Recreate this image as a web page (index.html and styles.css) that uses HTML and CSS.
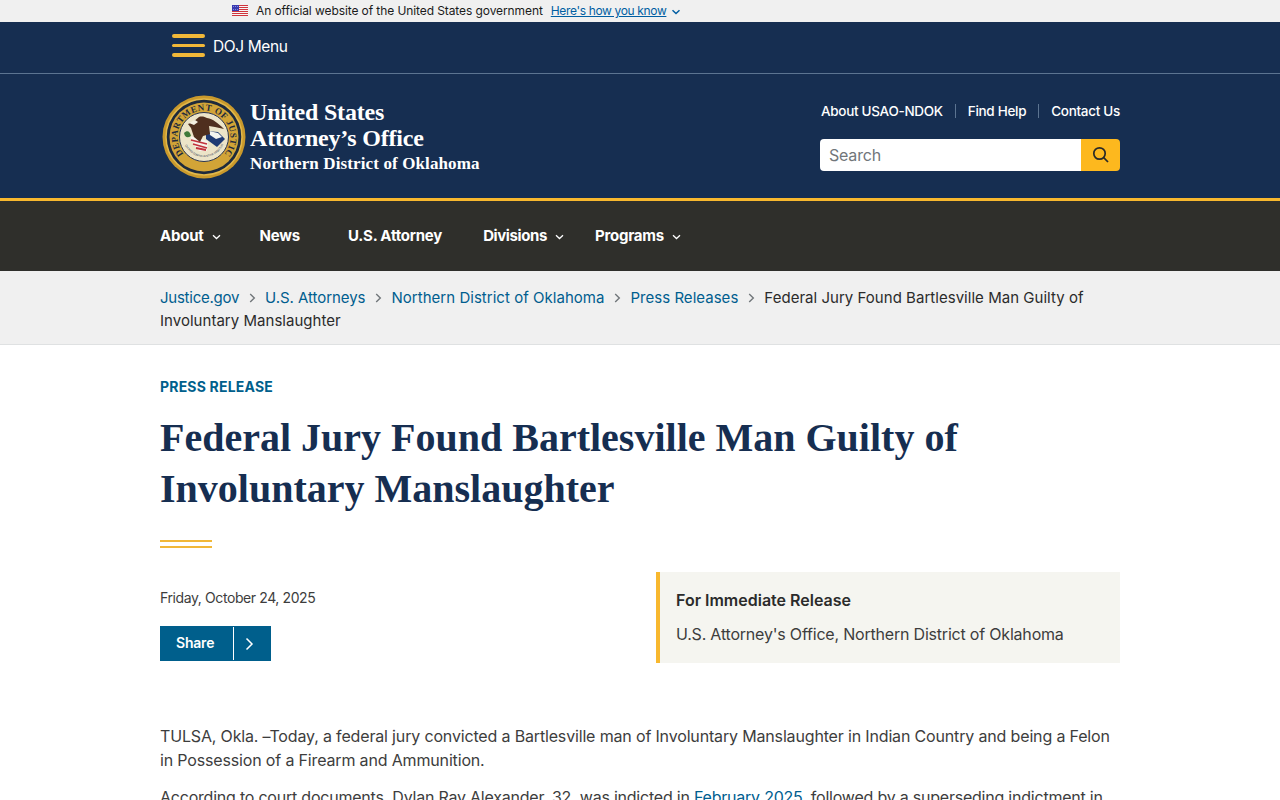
FILE: index.html
```html
<!DOCTYPE html>
<html lang="en">
<head>
<meta charset="utf-8">
<title>Federal Jury Found Bartlesville Man Guilty of Involuntary Manslaughter</title>
<link rel="stylesheet" href="styles.css">
</head>
<body>
<div class="gov">
  <svg class="flag" width="16" height="11" viewBox="0 0 16 11"><rect width="16" height="11" fill="#f6f6f6"/><path d="M0 .5h16M0 2.500h16M0 4.500h16M0 6.500h16M0 8.500h16M0 10.500h16" stroke="#d0343c" stroke-width="1"/><rect width="7" height="6" fill="#3a3ab0"/><path d="M1 1.500h5M1 4.500h5" stroke="#aab0e8" stroke-width=".7" stroke-dasharray="1 1"/></svg>
  <span class="gov-text">An official website of the United States government</span>
  <a class="gov-link" href="#">Here's how you know</a>
  <svg class="gov-chev" width="10" height="6" viewBox="0 0 10 6"><path d="M1.500 1.200 5 4.500l3.500-3.300" fill="none" stroke="#005ea2" stroke-width="1.500"/></svg>
</div>
<div class="dojbar">
  <div class="dojbar-in">
    <span class="burger"><i></i><i></i><i></i></span>
    <span class="dojmenu">DOJ Menu</span>
  </div>
</div>
<header class="head">
  <div class="wrap head-in">
    <a class="brand" href="#">
      <svg class="seal" width="84" height="84" viewBox="0 0 84 84">
        <defs>
          <path id="ring" d="M21.700 59A26.500 26.500 0 1 1 62.300 59"/>
          <path id="motto" d="M23 50A21 21 0 0 0 61 50"/>
        </defs>
        <circle cx="42" cy="42" r="41.500" fill="#c9992c"/>
        <circle cx="42" cy="42" r="38" fill="#1e2a3c" stroke="#e2b84a" stroke-width="1.500"/>
        <circle cx="42" cy="42" r="34.500" fill="#d2a437"/>
        <text class="seal-text"><textPath href="#ring" textLength="126" lengthAdjust="spacing">DEPARTMENT OF JUSTICE</textPath></text>
        <circle cx="42" cy="42" r="24.500" fill="#ece4c8" stroke="#2a3550" stroke-width="1"/>
        <text class="motto-text"><textPath href="#motto" textLength="48" lengthAdjust="spacingAndGlyphs">QUI PRO DOMINA JUSTITIA SEQUITUR</textPath></text>
        <path d="M44 36l12 1 7 7-8 8-11-8z" fill="#1f3a73"/>
        <path d="M47 36l9 2 4 4-6 2-6-4z" fill="#f4f4f0"/>
        <path d="M28 41l18 5-1 10-8 0c-4-4-7-9-9-15z" fill="#f6f3ec"/>
        <path d="M29 45l16 4M31 49l14 4M34 53l10 2" stroke="#c2323c" stroke-width="1.800"/>
        <path d="M31 27l6-5c3-1 6 0 8 1 6 1 11 5 17 11l-9-2-6-1 1 8-7 2-3 6-6-5-3-9-3-4z" fill="#4f2f1e"/>
        <path d="M27 28l6-3 3 2-4 3z" fill="#f4f0e2"/>
        <path d="M22 38c3-3 6-2 7 3-3 2-6 2-7-3z" fill="#3f7a3a"/>
      </svg>
      <span class="brand-text">
        <span class="brand-l1">United States</span>
        <span class="brand-l1">Attorney’s Office</span>
        <span class="brand-l2">Northern District of Oklahoma</span>
      </span>
    </a>
    <div class="util">
      <ul class="util-links">
        <li><a href="#">About USAO-NDOK</a></li>
        <li><a href="#">Find Help</a></li>
        <li><a href="#">Contact Us</a></li>
      </ul>
      <form class="search">
        <input class="search-in" type="text" placeholder="Search">
        <button class="search-btn" type="button" aria-label="Search">
          <svg width="18" height="18" viewBox="0 0 18 18"><circle cx="7.500" cy="7.500" r="5.700" fill="none" stroke="#2a2a28" stroke-width="1.700"/><path d="M11.700 11.700 16 16" stroke="#2a2a28" stroke-width="1.700"/></svg>
        </button>
      </form>
    </div>
  </div>
</header>
<nav class="nav">
  <div class="wrap nav-in">
    <a class="n-about" href="#">About<svg class="chev" width="9" height="6" viewBox="0 0 9 6"><path d="M1 1.200 4.500 4.500 8 1.200" fill="none" stroke="#fff" stroke-width="1.300"/></svg></a>
    <a class="n-news" href="#">News</a>
    <a class="n-atty" href="#">U.S. Attorney</a>
    <a class="n-div" href="#">Divisions<svg class="chev" width="9" height="6" viewBox="0 0 9 6"><path d="M1 1.200 4.500 4.500 8 1.200" fill="none" stroke="#fff" stroke-width="1.300"/></svg></a>
    <a class="n-prog" href="#">Programs<svg class="chev" width="9" height="6" viewBox="0 0 9 6"><path d="M1 1.200 4.500 4.500 8 1.200" fill="none" stroke="#fff" stroke-width="1.300"/></svg></a>
  </div>
</nav>
<div class="crumbs">
  <div class="wrap crumb-text">
    <a class="c-first" href="#">Justice.gov</a><svg class="sep" width="7" height="10" viewBox="0 0 7 10"><path d="M1.200 1 5.300 5 1.200 9" fill="none" stroke="#71767a" stroke-width="1.400"/></svg><a class="c-second" href="#">U.S. Attorneys</a><svg class="sep" width="7" height="10" viewBox="0 0 7 10"><path d="M1.200 1 5.300 5 1.200 9" fill="none" stroke="#71767a" stroke-width="1.400"/></svg><a href="#">Northern District of Oklahoma</a><svg class="sep" width="7" height="10" viewBox="0 0 7 10"><path d="M1.200 1 5.300 5 1.200 9" fill="none" stroke="#71767a" stroke-width="1.400"/></svg><a href="#">Press Releases</a><svg class="sep" width="7" height="10" viewBox="0 0 7 10"><path d="M1.200 1 5.300 5 1.200 9" fill="none" stroke="#71767a" stroke-width="1.400"/></svg>Federal Jury Found Bartlesville Man Guilty of Involuntary Manslaughter
  </div>
</div>
<main class="wrap main">
  <div class="eyebrow">PRESS RELEASE</div>
  <h1 class="title">Federal Jury Found Bartlesville Man Guilty of Involuntary Manslaughter</h1>
  <div class="rule"></div>
  <div class="meta">
    <div class="meta-left">
      <div class="date">Friday, October 24, 2025</div>
      <a class="share" href="#"><span class="share-l">Share</span><span class="share-r"><svg width="9" height="14" viewBox="0 0 9 14"><path d="M1.500 1.500 7 7l-5.500 5.500" fill="none" stroke="#fff" stroke-width="1.500"/></svg></span></a>
    </div>
    <aside class="release">
      <div class="release-h">For Immediate Release</div>
      <div class="release-b">U.S. Attorney's Office, Northern District of Oklahoma</div>
    </aside>
  </div>
  <div class="body">
    <p class="lead">TULSA, Okla. <span class="dash">–</span>Today, a federal jury convicted a Bartlesville man of Involuntary Manslaughter in Indian Country and being a Felon in Possession of a Firearm and Ammunition.</p>
    <p>According to court documents, Dylan Ray Alexander, 32, was indicted in <a href="#">February 2025</a>, followed by a superseding indictment in</p>
  </div>
</main>
</body>
</html>
```
FILE: styles.css
```css
* { box-sizing: border-box; }
html, body { margin: 0; padding: 0; height: 800px; overflow: hidden; }
body { background: #fff; color: #333; font-family: "Inter", "Liberation Sans", sans-serif; }
a { text-decoration: none; }
.wrap { width: 960px; margin: 0 auto; }

.gov { height: 22px; background: #f0f0f0; display: flex; align-items: center; padding: 0 0 1px 232px; font-size: 12px; color: #1b1b1b; }
.flag { margin-right: 8px; }
.gov-text { margin-right: 8px; letter-spacing: -.09px; white-space: nowrap; }
.gov-link { color: #005ea2; text-decoration: underline; letter-spacing: -.35px; white-space: nowrap; }
.gov-chev { margin-left: 5px; margin-top: 2px; }

.dojbar { height: 52px; background: #162e51; border-bottom: 1px solid #5c7491; }
.dojbar-in { width: 960px; margin: 0 auto; display: flex; align-items: center; height: 47px; padding-left: 12px; }
.burger { display: flex; flex-direction: column; gap: 6px; width: 33px; margin-right: 8px; }
.burger i { display: block; height: 3.500px; border-radius: 2px; background: #f1b839; }
.dojmenu { color: #fff; font-size: 15.500px; letter-spacing: -.4px; padding-top: 1px; }

.head { height: 124px; background: #162e51; }
.head-in { display: flex; justify-content: space-between; }
.brand { display: flex; align-items: flex-start; padding-top: 21px; padding-left: 2px; color: #fff; }
.seal { margin-right: 4px; flex: none; }
.brand-text { display: flex; flex-direction: column; font-family: "Liberation Serif", serif; font-weight: 700; padding-top: 4px; }
.brand-l1 { font-size: 24px; line-height: 26px; letter-spacing: -.2px; white-space: nowrap; }
.brand-l2 { font-size: 17px; line-height: 24px; letter-spacing: .12px; margin-top: 1px; white-space: nowrap; }
.seal-text { font-family: "Liberation Serif", serif; font-weight: 700; font-size: 9px; fill: #1e2a3c; }
.motto-text { font-family: "Liberation Sans", sans-serif; font-size: 2.800px; fill: #2a3550; }

.util { width: 300px; padding-top: 29px; }
.util-links { list-style: none; margin: 0; padding: 0; display: flex; justify-content: flex-end; font-size: 13.500px; line-height: 16px; height: 16px; font-weight: 500; }
.util-links li { padding: 0 12px; border-left: 1px solid #5c7491; height: 14px; margin-top: 1px; display: flex; align-items: center; white-space: nowrap; }
.util-links li:first-child { border-left: 0; padding-left: 0; }
.util-links li:last-child { padding-right: 0; }
.util-links a { color: #fff; letter-spacing: -.3px; }
.search { display: flex; height: 32px; margin-top: 20px; }
.search-in { flex: 1; min-width: 0; border: 0; border-radius: 4px 0 0 4px; background: #fff; padding: 0 10px 0 9px; font: 16px "Inter", sans-serif; letter-spacing: -.2px; outline: 0; }
.search-in::placeholder { color: #71767a; opacity: 1; }
.search-btn { width: 39px; border: 0; padding: 0; background: #fdb81e; border-radius: 0 4px 4px 0; display: flex; align-items: center; justify-content: center; }

.nav { height: 73px; background: #2f2f2b; border-top: 3px solid #f8b82e; }
.nav-in { display: flex; align-items: center; height: 68px; }
.nav a { color: #fff; font-weight: 700; font-size: 15px; letter-spacing: -.22px; display: flex; align-items: center; white-space: nowrap; }
.chev { margin-left: 8px; margin-top: 4px; }
.n-news { margin-left: 39px; }
.n-atty { margin-left: 48px; }
.n-div { margin-left: 41px; }
.n-prog { margin-left: 31px; }
.nav .n-div { letter-spacing: -.4px; }

.crumbs { height: 74px; background: #f0f0f0; border-bottom: 1px solid #dfe1e2; padding-top: 15px; }
.crumb-text { font-size: 15px; line-height: 23px; color: #2b2b2b; letter-spacing: .03px; }
.crumb-text a { color: #005e8f; }
.crumb-text .c-first { letter-spacing: -.25px; }
.crumb-text .c-second { letter-spacing: -.05px; }
.sep { margin: 0 9px 0 10px; }

.main { padding-top: 33px; }
.eyebrow { color: #005f8c; font-weight: 700; font-size: 14px; line-height: 18px; letter-spacing: .2px; }
.title { margin: 16px 0 0; font-family: "Liberation Serif", serif; font-weight: 700; font-size: 40px; line-height: 51px; color: #162e51; }
.rule { width: 52px; height: 8px; margin-top: 26px; border-top: 2px solid #f1b839; border-bottom: 2px solid #f1b839; }
.meta { display: flex; justify-content: space-between; margin-top: 24px; }
.meta-left { padding-top: 18px; }
.date { font-size: 14px; line-height: 16px; color: #3d3d3d; letter-spacing: -.4px; }
.share { display: inline-flex; margin-top: 20px; height: 35px; background: #005f8c; color: #fff; font-weight: 600; font-size: 14px; letter-spacing: -.2px; }
.share-l { width: 74px; padding-left: 16px; line-height: 31px; border-right: 1px solid #fff; margin: 1px 0; }
.share-r { width: 37px; display: flex; align-items: center; padding-left: 11px; }
.release { width: 464px; height: 91px; background: #f5f5f0; border-left: 4px solid #f8b82e; padding: 18px 16px; }
.release-h { font-weight: 600; font-size: 16px; line-height: 20px; color: #2b2b2b; letter-spacing: 0; }
.release-b { margin-top: 14px; font-size: 16px; line-height: 20px; color: #3d3d3d; letter-spacing: -.2px; }
.body { margin-top: 61px; font-size: 16px; line-height: 24px; color: #3d3d3d; letter-spacing: -.22px; }
.body p { margin: 0 0 13px; }
.body .lead { letter-spacing: -.16px; }
.body a { color: #005e8f; text-decoration: underline; }
.dash { margin-right: -1px; }
```
